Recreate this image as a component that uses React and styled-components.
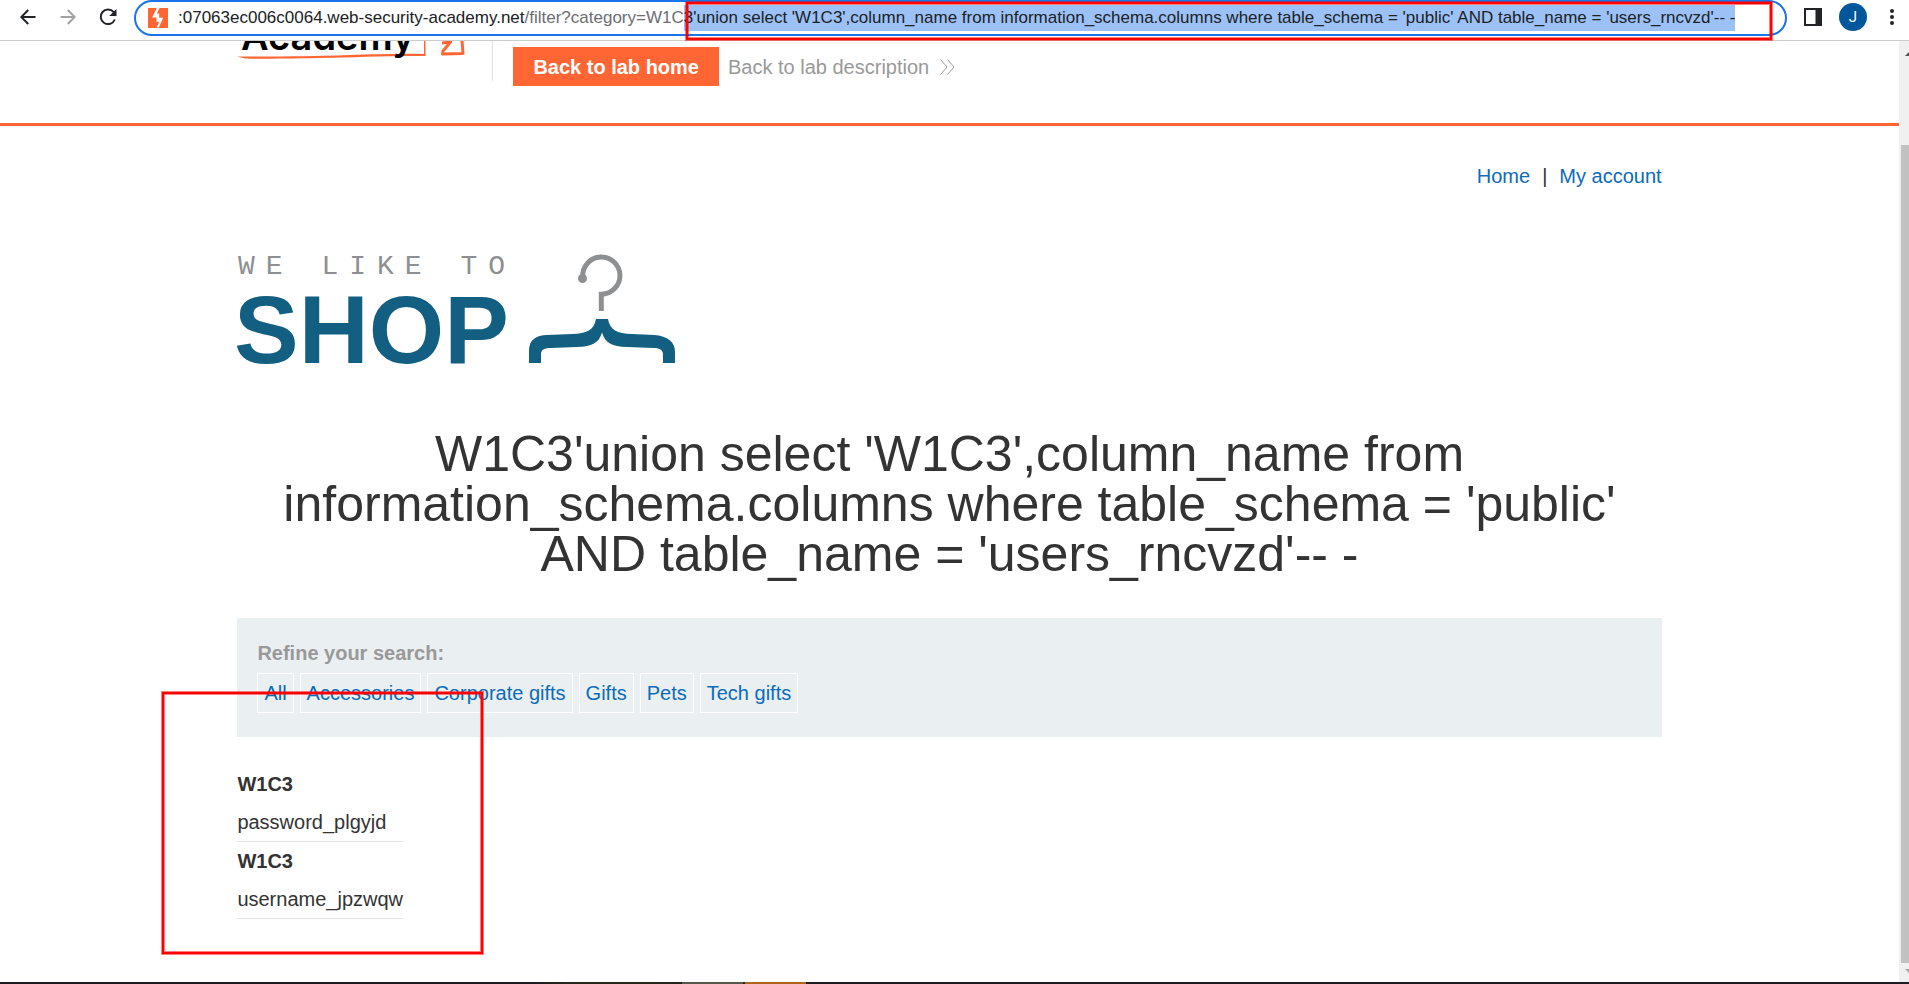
import React, { useEffect, useRef } from "react";
import styled, { createGlobalStyle } from "styled-components";

const GlobalStyle = createGlobalStyle`
  *, *::before, *::after { box-sizing: border-box; }
  html, body { margin: 0; padding: 0; background: #fff; }
  body {
    color: #333;
    font-family: "Liberation Sans", Arial, sans-serif;
    font-size: 20px;
    line-height: 24px;
  }
`;

const Browser = styled.div`
  display: flex;
  flex-direction: column;
  min-height: 100vh;
`;

const Toolbar = styled.div`
  display: flex;
  align-items: flex-start;
  height: 41px;
  border-bottom: 1px solid #ccc;
  padding-left: 8px;
`;

const ToolButton = styled.button`
  display: flex;
  align-items: center;
  justify-content: center;
  flex: none;
  width: ${(p) => p.$width || 40}px;
  height: 34px;
  padding: 0;
  border: 0;
  background: none;
  color: ${(p) => (p.$muted ? "#a3a3a5" : "#222326")};
`;

const AddressBar = styled.div`
  position: relative;
  display: flex;
  align-items: center;
  flex: 1;
  min-width: 0;
  height: 36px;
  margin: 0 7px 0 6px;
  padding: 0 18px 0 12px;
  border: 2px solid #1a73e8;
  border-radius: 18px;
  font-size: 17px;
  line-height: 26px;
`;

const SiteIcon = styled.svg`
  flex: none;
  width: 20px;
  height: 20px;
  margin-right: 10px;
`;

const Host = styled.label`
  flex: none;
  color: #202124;
`;

const UrlInput = styled.input`
  flex: 1;
  min-width: 0;
  height: 26px;
  padding: 0;
  border: 0;
  outline: 0;
  background: none;
  color: #6b6e72;
  font: inherit;
  &::selection { background: #9bc1f7; color: #202124; }
`;

const Avatar = styled.span`
  display: flex;
  align-items: center;
  justify-content: center;
  width: 28px;
  height: 28px;
  border-radius: 50%;
  background: #01579b;
  color: #fff;
  font-family: Roboto, sans-serif;
  font-size: 15px;
`;

const Marker = styled.div`
  position: absolute;
  border: 2px solid #f00;
  box-shadow: 0 0 0 1px rgba(255, 0, 0, 0.5), inset 0 0 0 1px rgba(255, 0, 0, 0.5);
  pointer-events: none;
`;

const UrlMarker = styled(Marker)`
  top: 0;
  bottom: -6px;
  left: 550px;
  right: 13px;
`;

const ResultMarker = styled(Marker)`
  top: -45px;
  left: -75px;
  width: 321px;
  height: 262px;
`;

const Viewport = styled.div`
  display: flex;
  flex: 1;
`;

const Page = styled.div`
  flex: 1;
  min-width: 0;
`;

const Container = styled.div`
  width: 75%;
  margin: 0 auto;
`;

const LabHeader = styled.header`
  border-bottom: 3px solid #ff6633;
`;

const LabHeaderRow = styled(Container)`
  display: flex;
  align-items: flex-start;
  height: 82px;
`;

const AcademyLogo = styled.svg`
  flex: none;
  width: 256px;
  height: 40px;
  margin-right: 20px;
  border-right: 1px solid #e0e0e0;
`;

const LabHome = styled.a`
  height: 39px;
  margin-top: 6px;
  padding: 0 20px;
  background: #ff6633;
  color: #fff;
  font-weight: bold;
  line-height: 40px;
  text-decoration: none;
`;

const LabDescription = styled.a`
  display: flex;
  align-items: center;
  gap: 11px;
  margin: 6px 0 0 9px;
  color: #999;
  line-height: 40px;
  text-decoration: none;
`;

const TopNav = styled.nav`
  display: flex;
  justify-content: flex-end;
  gap: 12px;
  padding-top: 38px;
`;

const Link = styled.a`
  color: #0b6cba;
  text-decoration: none;
`;

const ShopLogo = styled.svg`
  display: block;
  width: 440px;
  height: 112px;
  margin-top: 66px;
  overflow: visible;
`;

const Title = styled.h1`
  margin: 63px 0 0;
  font-size: 50px;
  font-weight: normal;
  line-height: 50px;
  text-align: center;
`;

const Filters = styled.section`
  margin-top: 39px;
  padding: 23px 20px 24px;
  background: #eaeff2;
`;

const FilterLabel = styled.div`
  margin-bottom: 8px;
  color: #999;
  font-weight: bold;
`;

const FilterList = styled.div`
  display: flex;
  flex-wrap: wrap;
  gap: 6px;
`;

const FilterLink = styled(Link)`
  padding: 0 6px;
  border: 1px solid #fff;
  line-height: 38px;
`;

const Results = styled.div`
  position: relative;
  padding: 28px 0 61px;
`;

const ResultTable = styled.table`
  border-collapse: separate;
  border-spacing: 0;
  text-align: left;
`;

const NameCell = styled.th`
  height: 38px;
  padding: 0;
`;

const ValueCell = styled.td`
  height: 39px;
  padding: 0;
  border-bottom: 1px solid #e2e2e2;
`;

const ScrollTrack = styled.div`
  display: flex;
  flex-direction: column;
  width: 10px;
  padding: 10px 0 8px 2px;
  background: #f0f0f0;
`;

const ScrollThumb = styled.div`
  flex: 1;
  margin: 89px 0 6px;
  background: #c1c1c1;
`;

const Taskbar = styled.div`
  height: 2px;
  background: linear-gradient(
    to right,
    #1e1c20 0 28%, #25291a 30% 34%, #25221e 35.7%,
    #54584a 35.7% 38.9%, #2a2a1c 38.9% 39%,
    #b0651f 39% 42.2%, #1e1c20 42.2%
  );
`;

const HOST = ":07063ec006c0064.web-security-academy.net";
const PATH = "/filter?category=W1C";
const PAYLOAD =
  "'union select 'W1C3',column_name from information_schema.columns where table_schema = 'public' AND table_name = 'users_rncvzd'-- -";
const CATEGORIES = ["All", "Accessories", "Corporate gifts", "Gifts", "Pets", "Tech gifts"];
const ROWS = ["password_plgyjd", "username_jpzwqw"];

function Address() {
  const input = useRef(null);
  useEffect(() => {
    const url = PATH + "3" + PAYLOAD;
    input.current.focus();
    input.current.setSelectionRange(PATH.length, url.length);
  }, []);
  return (
    <AddressBar>
      <SiteIcon viewBox="0 0 20 20" aria-hidden="true">
        <path fill="#ff6633" d="M0 0H20V20H0Z" />
        <path fill="#fff" d="M8.8 0H11.6L8.8 5.4H11.2V9.8H15.2L10.9 19.5H8.6L11.2 13.8H8.4V9.6H4.2Z" />
      </SiteIcon>
      <Host htmlFor="url">{HOST}</Host>
      <UrlInput id="url" ref={input} defaultValue={PATH + "3" + PAYLOAD} spellCheck={false} />
      <UrlMarker />
    </AddressBar>
  );
}

export default function App() {
  return (
    <Browser>
      <GlobalStyle />
      <Toolbar>
        <ToolButton aria-label="Back">
          <svg width="16" height="16" viewBox="0 0 16 16" fill="none" stroke="currentColor" strokeWidth="2">
            <path d="M15.5 8H1.5M8.2 1L1.3 8L8.2 15" />
          </svg>
        </ToolButton>
        <ToolButton aria-label="Forward" $muted>
          <svg width="16" height="16" viewBox="0 0 16 16" fill="none" stroke="currentColor" strokeWidth="2">
            <path d="M.5 8H14.5M7.8 1L14.7 8L7.8 15" />
          </svg>
        </ToolButton>
        <ToolButton aria-label="Reload">
          <svg width="18" height="18" viewBox="0 0 18 18" fill="none" stroke="currentColor" strokeWidth="2">
            <path d="M14.7 4.2A7.3 7.3 0 1 0 15.8 11.5" />
            <path fill="currentColor" stroke="none" d="M17.5 1V8H10.2Z" />
          </svg>
        </ToolButton>
        <Address />
        <ToolButton $width={38} aria-label="Side panel">
          <svg width="18" height="18" viewBox="0 0 18 18">
            <path fill="currentColor" fillRule="evenodd" d="M0 0H18V18H0ZM2 2V16H11.5V2Z" />
          </svg>
        </ToolButton>
        <ToolButton aria-label="Profile" $width={42}>
          <Avatar>J</Avatar>
        </ToolButton>
        <ToolButton $width={35} aria-label="Menu">
          <svg width="4" height="16" viewBox="0 0 4 16" fill="currentColor">
            <circle cx="2" cy="2" r="2" />
            <circle cx="2" cy="8" r="2" />
            <circle cx="2" cy="14" r="2" />
          </svg>
        </ToolButton>
      </Toolbar>

      <Viewport>
        <Page>
          <LabHeader>
            <LabHeaderRow>
              <AcademyLogo viewBox="0 0 255 40" role="img" aria-label="Academy">
                <path fill="#ff6633" d="M0 15.5C30 15.500 60 15.500 100 14.500C130 13.500 160 12.500 187 13V0H188.500V15C150 14.500 120 16.500 80 17C50 17.500 20 18 8 17.500Z" />
                <text x="4" y="9" fontFamily="Inter, sans-serif" fontWeight="600" fontSize="38" fill="#000">
                  Academy
                </text>
                <path fill="none" stroke="#ff6633" strokeWidth="3" strokeLinejoin="round" d="M205 2L213.500 1L206 10L205.500 13L226 12.500L225 0" />
              </AcademyLogo>
              <LabHome href="#">Back to lab home</LabHome>
              <LabDescription href="#">
                Back to lab description
                <svg width="15" height="16" viewBox="0 0 15 16" fill="none" stroke="#999" aria-hidden="true">
                  <path d="M.5 .5L7 8L.5 15.5M7.5 .5L14 8L7.5 15.5" />
                </svg>
              </LabDescription>
            </LabHeaderRow>
          </LabHeader>

          <Container>
            <TopNav>
              <Link href="#">Home</Link>
              <span>|</span>
              <Link href="#">My account</Link>
            </TopNav>

            <ShopLogo viewBox="0 0 440 112" role="img" aria-label="We like to shop">
              <text x="1" y="20" fontFamily="Liberation Mono, monospace" fontSize="28" letterSpacing="11" fill="#8e8f91">
                WE LIKE TO
              </text>
              <text x="-3" y="109" fontFamily="Liberation Sans, sans-serif" fontWeight="bold" fontSize="97" fill="#125f82">
                SHOP
              </text>
              <circle cx="345.5" cy="24.5" r="4.5" fill="#8e8f91" />
              <path fill="none" stroke="#8e8f91" strokeWidth="5" d="M345.8 23A18.6 18.6 0 1 1 364.3 40.2V57" />
              <path fill="#125f82" d="M292 109V97C292 86 299 81 310 81L335 80C350 79.500 357 76 359 65H371C373 76 380 79.500 395 80L417 81C431 82 438 88 438 98V109H426V101C426 96 423 94 417 94L390 93C375 92.500 368 89 365 78.500C362 89 355 92.500 340 93L314 94C306 94 304 96 304 101V109Z" />
            </ShopLogo>

            <Title>
              W1C3{PAYLOAD}
            </Title>

            <Filters>
              <FilterLabel>Refine your search:</FilterLabel>
              <FilterList>
                {CATEGORIES.map((name) => (
                  <FilterLink href="#" key={name}>{name}</FilterLink>
                ))}
              </FilterList>
            </Filters>

            <Results>
              <ResultTable>
                <tbody>
                  {ROWS.map((value) => (
                    <React.Fragment key={value}>
                      <tr><NameCell scope="row">W1C3</NameCell></tr>
                      <tr><ValueCell>{value}</ValueCell></tr>
                    </React.Fragment>
                  ))}
                </tbody>
              </ResultTable>
              <ResultMarker />
            </Results>
          </Container>
        </Page>
        <ScrollTrack>
          <svg width="8" height="5" viewBox="0 0 8 5"><path d="M4 5L9 0V5Z" fill="#505050" /></svg>
          <ScrollThumb />
          <svg width="8" height="5" viewBox="0 0 8 5"><path d="M4 0H9V5Z" fill="#a3a3a3" /></svg>
        </ScrollTrack>
      </Viewport>
      <Taskbar />
    </Browser>
  );
}
